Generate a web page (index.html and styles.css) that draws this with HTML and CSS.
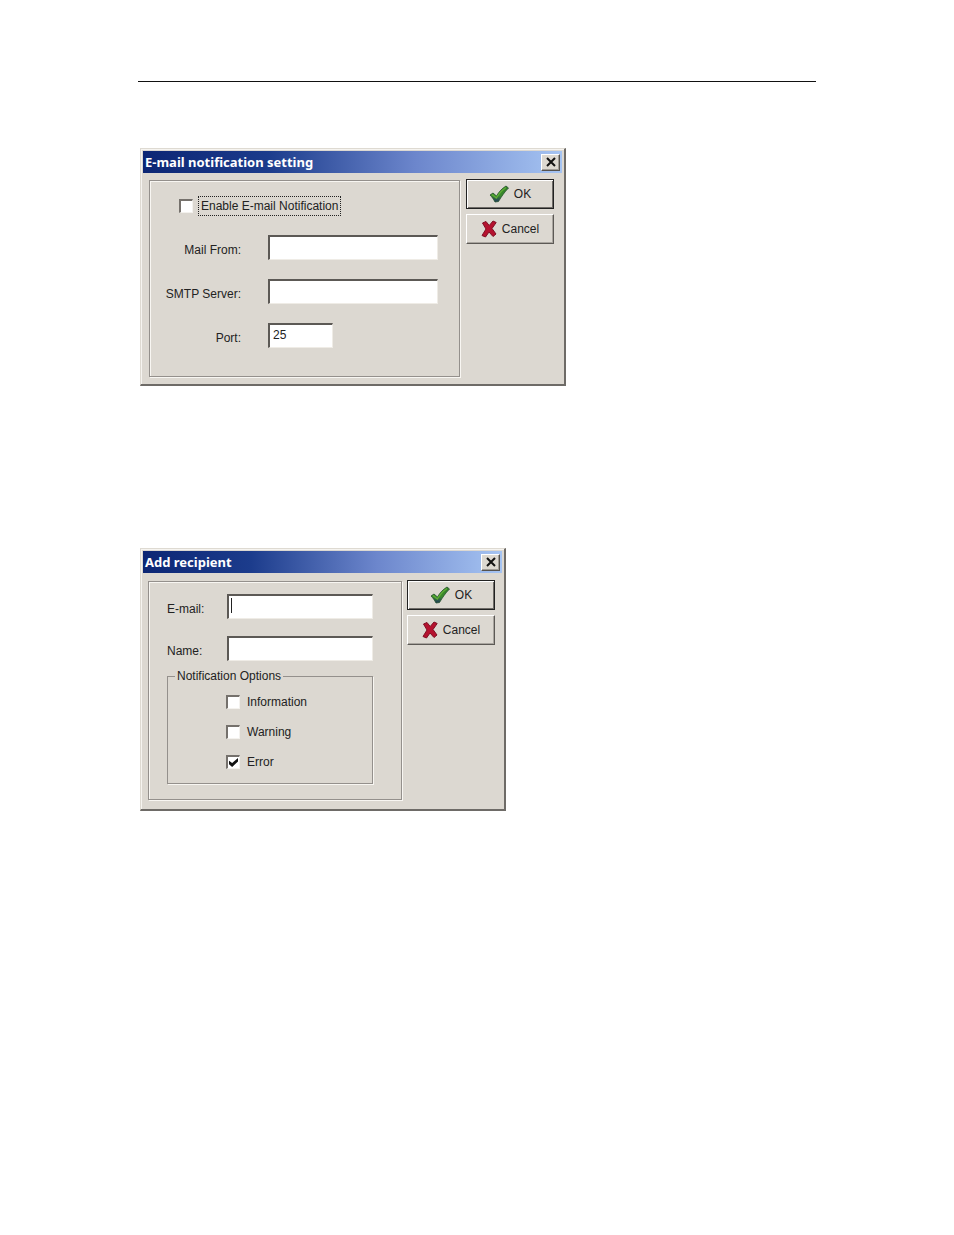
FILE: index.html
```html
<!DOCTYPE html>
<html lang="en">
<head>
<meta charset="utf-8">
<title>E-mail notification</title>
<link rel="stylesheet" href="styles.css">
</head>
<body>
<svg class="sprite" aria-hidden="true">
  <defs>
    <linearGradient id="green" x1="0" y1="0" x2="0" y2="1">
      <stop offset="0" stop-color="#2f7a2a"/>
      <stop offset="0.6" stop-color="#3c8c2c"/>
      <stop offset="1" stop-color="#1c3560"/>
    </linearGradient>
  </defs>
  <symbol id="check" viewBox="0 0 20 18">
    <path d="M1 10 L4 8 L7.500 11 C10 6.500 13 3.500 17 1 L19.500 3 C15.500 7 12.500 11.500 9.500 16.500 L6 17 C4.500 14 3 12 1 10 Z" fill="url(#green)" stroke="#24522c" stroke-width="0.8"/>
    <path d="M3 9.500 L7.300 13 C10 8.500 13 5 17 2.500" fill="none" stroke="#5faf35" stroke-width="1.400"/>
  </symbol>
  <symbol id="cross" viewBox="0 0 16 18">
    <path d="M1.500 3 L5 1.500 L8.200 5.500 L12 1 L15.200 2.500 L11 8.500 L15 14 L12 16.500 L8 12 L4.500 17 L1 15.500 L5 9 Z" fill="#b5122f" stroke="#7f1024" stroke-width="1" stroke-linejoin="round"/>
  </symbol>
  <symbol id="close" viewBox="0 0 12 10">
    <path d="M2 1 L10 9 M10 1 L2 9" stroke="#111" stroke-width="2" fill="none"/>
  </symbol>
</svg>
<main class="page">
  <hr class="rule">

  <section class="dialog" aria-labelledby="t1">
    <header class="titlebar">
      <h2 class="title" id="t1">E-mail notification setting</h2>
      <button class="close" type="button" aria-label="Close"><svg><use href="#close"/></svg></button>
    </header>
    <form class="body">
      <div class="group settings">
        <div class="option enable">
          <input class="tick" type="checkbox" id="enable">
          <label class="focused" for="enable">Enable E-mail Notification</label>
        </div>
        <label class="label" for="from">Mail From:</label>
        <input class="field" type="text" id="from">
        <label class="label" for="smtp">SMTP Server:</label>
        <input class="field" type="text" id="smtp">
        <label class="label" for="port">Port:</label>
        <input class="field short" type="text" id="port" value="25">
      </div>
      <div class="actions">
        <button class="button default" type="button"><svg class="check"><use href="#check"/></svg>OK</button>
        <button class="button" type="button"><svg class="cross"><use href="#cross"/></svg>Cancel</button>
      </div>
    </form>
  </section>

  <section class="dialog compact" aria-labelledby="t2">
    <header class="titlebar">
      <h2 class="title" id="t2">Add recipient</h2>
      <button class="close" type="button" aria-label="Close"><svg><use href="#close"/></svg></button>
    </header>
    <form class="body">
      <div class="group recipient">
        <label class="label" for="email">E-mail:</label>
        <div class="entry">
          <input class="field" type="text" id="email">
          <span class="caret"></span>
        </div>
        <label class="label" for="name">Name:</label>
        <input class="field" type="text" id="name">
        <fieldset class="options">
          <legend class="legend">Notification Options</legend>
          <div class="option"><input class="tick" type="checkbox" id="info"><label for="info">Information</label></div>
          <div class="option"><input class="tick" type="checkbox" id="warn"><label for="warn">Warning</label></div>
          <div class="option"><input class="tick" type="checkbox" id="err" checked><label for="err">Error</label></div>
        </fieldset>
      </div>
      <div class="actions">
        <button class="button default" type="button"><svg class="check"><use href="#check"/></svg>OK</button>
        <button class="button" type="button"><svg class="cross"><use href="#cross"/></svg>Cancel</button>
      </div>
    </form>
  </section>
</main>
</body>
</html>
```
FILE: styles.css
```css
* { box-sizing: border-box; }

body {
  margin: 0;
  background: #fff;
  color: #222;
  font: 12px/14px "Liberation Sans", Arial, sans-serif;
}

.sprite { position: absolute; width: 0; height: 0; }

.page { padding: 81px 138px 0; }

.rule {
  height: 1px;
  margin: 0 0 66px;
  border: 0;
  background: #111;
}

.dialog {
  width: fit-content;
  margin: 0 2px 162px;
  padding: 2px;
  border: solid;
  border-width: 1px 2px 2px 1px;
  border-color: #dedad2 #6e6b67 #6e6b67 #dedad2;
  background: #dcd8d1;
  box-shadow: inset 1px 1px #f6f4f0;
}

.titlebar {
  display: flex;
  align-items: center;
  justify-content: space-between;
  height: 22px;
  padding: 0 2px;
  background: linear-gradient(90deg, #0c2674, #1c3c8c 30%, #6c86cc 65%, #a6c4f2);
}

.title {
  margin: 0;
  color: #fff;
  font: bold 13px/16px "Noto Sans", Tahoma, sans-serif;
}

.close {
  display: grid;
  place-items: center;
  width: 19px;
  height: 17px;
  padding: 0;
  border: 1px solid;
  border-color: #fff #55524e #55524e #fff;
  background: #dcd8d1;
  box-shadow: inset -1px -1px #a19d97;
}

.close svg { width: 12px; height: 10px; }

.body {
  display: flex;
  gap: 6px;
  padding: 6px 8px 5px 6px;
}

.compact .body { gap: 5px; padding: 7px 7px 7px 5px; }

.group {
  display: grid;
  align-content: start;
  margin-top: 1px;
  border: 1px solid #94908c;
  box-shadow: 1px 1px #f8f6f2, inset 1px 1px #f8f6f2;
}

.settings {
  grid-template-columns: 91px 170px;
  gap: 19px 27px;
  padding: 15px 21px 28px 0;
}

.settings .label { text-align: right; }

.recipient {
  grid-template-columns: 60px 146px;
  row-gap: 17px;
  padding: 12px 28px 15px 18px;
}

.label { padding-top: 8px; }

.field {
  width: 100%;
  height: 25px;
  padding: 0 3px 3px;
  border: solid;
  border-width: 2px 1px 1px 2px;
  border-color: #5c5955 #efece6 #efece6 #5c5955;
  background: #fff;
  color: #222;
  font: inherit;
}

.short { width: 65px; }

.entry { position: relative; }

.caret {
  position: absolute;
  top: 4px;
  left: 4px;
  width: 1px;
  height: 15px;
  background: #222;
}

.option { display: flex; align-items: center; gap: 7px; }

.enable { grid-column: 1 / -1; gap: 5px; height: 20px; padding-left: 29px; }

.focused { padding: 2px; border: 1px dotted #222; }

.tick {
  appearance: none;
  display: grid;
  place-items: center;
  width: 14px;
  height: 14px;
  margin: 0;
  border: solid;
  border-width: 2px 1px 1px 2px;
  border-color: #75716c #f4f2ee #f4f2ee #75716c;
  background: #fff;
}

.tick:checked::before {
  content: "";
  width: 9px;
  height: 9px;
  background: #111;
  clip-path: polygon(0 30%, 35% 55%, 100% 0, 100% 38%, 35% 100%, 0 70%);
}

.options {
  display: grid;
  grid-column: 1 / -1;
  gap: 16px;
  min-width: 0;
  margin: -9px 0 0;
  padding: 12px 0 14px 58px;
  border: 1px solid #94908c;
  box-shadow: 1px 1px #f8f6f2;
}

.legend { margin-left: -51px; padding: 0 2px; }

.actions { display: flex; flex-direction: column; gap: 5px; }

.button {
  display: flex;
  align-items: center;
  justify-content: center;
  gap: 5px;
  width: 88px;
  height: 30px;
  padding: 0;
  border: 1px solid;
  border-color: #fff #5c5955 #5c5955 #fff;
  background: #dcd8d1;
  box-shadow: inset -1px -1px #a9a59f;
  color: #222;
  font: inherit;
}

.default {
  border-color: #222;
  box-shadow: inset 1px 1px #fff, inset -1px -1px #6e6b67;
}

.check { width: 20px; height: 18px; }

.cross { width: 16px; height: 18px; }
```
